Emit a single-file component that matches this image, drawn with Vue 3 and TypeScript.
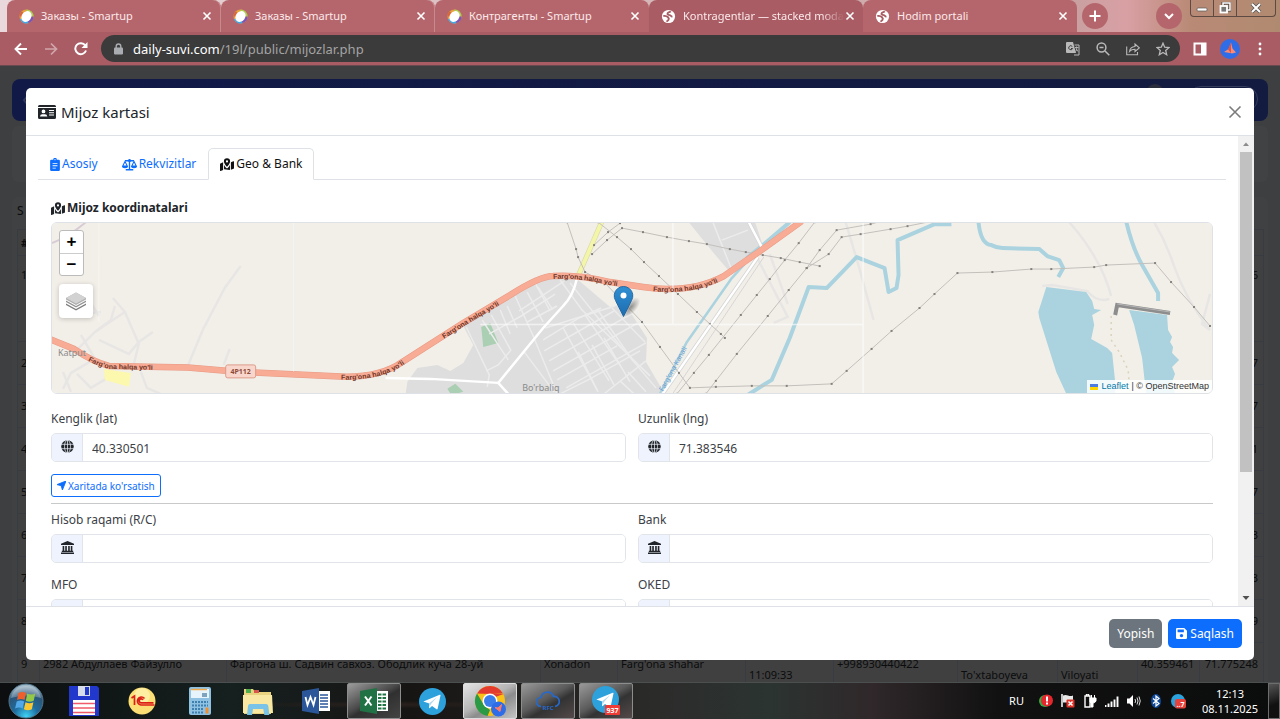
<script setup lang="ts">
import { ref } from 'vue'

interface BrowserTab { title: string; kind: 'smartup' | 'globe'; active?: boolean; fade?: boolean }
const browserTabs: BrowserTab[] = [
  { title: 'Заказы - Smartup', kind: 'smartup' },
  { title: 'Заказы - Smartup', kind: 'smartup' },
  { title: 'Контрагенты - Smartup', kind: 'smartup' },
  { title: 'Kontragentlar — stacked moda', kind: 'globe', active: true, fade: true },
  { title: 'Hodim portali', kind: 'globe' },
]

const columnWidths = [22, 187, 314, 77, 128, 88, 124, 100, 80, 62, 64]
const rows = [
  { no: '1', end: '6', tall: true },
  { no: '2', end: '7' },
  { no: '3', end: '7' },
  { no: '4', end: '1' },
  { no: '5', end: '7' },
  { no: '6', end: '3' },
  { no: '7', end: '3' },
  { no: '8', end: '9' },
]

const cardTabs = [
  { label: 'Asosiy', icon: 'clipboard', w: 10 },
  { label: 'Rekvizitlar', icon: 'scale', w: 15 },
  { label: 'Geo & Bank', icon: 'mapped', w: 14 },
]
const currentTab = ref('Geo & Bank')

const lat = ref('40.330501')
const lng = ref('71.383546')
const account = ref('')
const bank = ref('')
const mfo = ref('')
const oked = ref('')

type Point = [number, number]
const powerLines: Point[][] = [
  [[567, 222], [576, 249], [578, 257], [585, 272], [605, 283], [642, 322], [660, 347], [679, 373], [690, 388], [716, 387], [752, 386], [787, 386], [832, 384], [847, 371], [872, 349], [892, 331], [920, 308], [935, 294], [958, 273], [993, 272], [1032, 269], [1052, 269], [1095, 267], [1107, 265], [1156, 263], [1172, 282], [1195, 307], [1211, 326]],
  [[598, 222], [617, 237], [631, 249], [644, 262], [659, 276], [678, 294], [697, 312], [710, 324], [721, 334], [725, 338]],
  [[620, 223], [608, 232], [594, 245]],
  [[592, 254], [607, 240], [622, 228], [643, 232], [667, 237], [689, 241], [707, 244], [730, 249], [746, 252], [763, 255], [781, 258], [800, 262], [820, 266]],
  [[677, 394], [694, 373], [709, 355], [741, 315], [757, 295], [770, 279], [785, 260], [799, 243], [815, 222]],
  [[706, 394], [716, 381], [737, 354], [768, 316], [789, 290], [807, 268], [829, 254], [842, 237], [861, 234], [891, 229], [908, 226], [933, 221]],
  [[807, 268], [820, 250], [837, 230], [871, 224], [882, 221]],
]
const pylons = powerLines.flat()
const join = (pts: Point[]) => pts.map(p => p.join(',')).join(' ')

const streets = [
  'M466 327l23 48-2 12', 'M482 320l16 25 10 15', 'M491 315l20 36', 'M500 310l10 24', 'M507 306l10 22',
  'M515 296l18 40 24 58', 'M527 292l16 30', 'M538 287l14 22 4-3', 'M560 280l22 30 68 66', 'M570 283l48 60 38 45',
  'M489 334l32-18 34-22', 'M519 311l45-30', 'M527 322l30-16', 'M545 328l70-22', 'M543 340l36-22 22-10',
  'M544 351l70-40', 'M549 361l84-48', 'M553 371l90-51', 'M557 380l60-34', 'M566 388l80-45', 'M560 394l30-15 50-28',
  'M563 328l34 62', 'M573 323l36 58', 'M585 315l36 52', 'M597 309l36 52', 'M578 352l20 40', 'M592 345l22 40',
  'M604 338l26 44', 'M612 308l33 34', 'M524 352l30 40', 'M620 381l14 13', 'M628 372l18 20', 'M604 394l42-33',
  'M510 351l-12 14-12 6', 'M535 283l15 28', 'M713 222l19 48', 'M722 240l26-10',
]
const leftTracks = [
  'M70 356l24-24 16-12 4-14', 'M80 335l14 24-24 14-8 16', 'M94 332l30-20-12-14', 'M98 340l30 14 10-12 14-10', 'M124 312l14 32-6 24',
  'M62 372l8 20', 'M76 374l14 14 20-12 16 4', 'M140 372l6 16 14 6', 'M70 300l12 14 18-2', 'M88 300l10 16',
]
const roadLabels = [47, 301, 413, 540, 641]
</script>

<template>
  <div class="screen">
    <svg class="defs" aria-hidden="true">
      <symbol id="i-smartup" viewBox="0 0 16 16">
        <circle cx="8" cy="8" r="7.500" fill="#e8a13a" /><path d="M8 .5A7.500 7.500 0 0 1 15.500 8L8 8z" fill="#a9cf54" />
        <path d="M.5 8A7.500 7.500 0 0 1 3 2.500L8 8z" fill="#d8673c" /><path d="M15.500 8A7.500 7.500 0 0 1 10 15.200L8 8z" fill="#7b54b8" /><path d="M10 15.200A7.500 7.500 0 0 1 1 11L8 8z" fill="#43a7e6" />
        <ellipse cx="8" cy="8" rx="5" ry="6.200" transform="rotate(38 8 8)" fill="#fff" />
      </symbol>
      <symbol id="i-world" viewBox="0 0 16 16">
        <circle cx="8" cy="8" r="7" fill="#fff" />
        <path d="M2.500 7.500c2.500-.500 4 .300 5 1.300s1.500 1.500.5 2.700-1.500 1-1.800 2M10.500 2.500C9.500 3.500 7.500 3.200 7 4.500s1 2 2.200 2 1.500 1.500 3 1.800" fill="none" stroke="#a85c63" stroke-width="2" />
      </symbol>
      <symbol id="i-clipboard" viewBox="0 0 12 16">
        <path fill="currentColor" fill-rule="evenodd" d="M1.500 2H3.800a2.200 2.200 0 0 1 4.400 0h2.300A1.500 1.500 0 0 1 12 3.500v11a1.500 1.500 0 0 1-1.500 1.500h-9A1.500 1.500 0 0 1 0 14.500v-11A1.500 1.500 0 0 1 1.500 2zM6 1.300a.7.7 0 1 0 0 1.400.7.7 0 0 0 0-1.400zM3 6v1h6V6zm0 3v1h6V9zm0 3v1h4v-1z" />
      </symbol>
      <symbol id="i-scale" viewBox="0 0 20 16">
        <path d="M10 1v13M4 3h12M5 15h10" stroke="currentColor" stroke-width="1.800" fill="none" /><circle cx="10" cy="2.500" r="2" fill="currentColor" />
        <path d="M4 4L1 10h6zM16 4l-3 6h6z" fill="none" stroke="currentColor" stroke-width="1.400" /><path d="M0 10h8a4 3 0 0 1-8 0zM12 10h8a4 3 0 0 1-8 0z" fill="currentColor" />
      </symbol>
      <symbol id="i-mapped" viewBox="0 0 18 16">
        <path fill="currentColor" fill-rule="evenodd" d="M9 0a4 4 0 0 1 4 4c0 1.800-2.400 5-4 7-1.600-2-4-5.200-4-7a4 4 0 0 1 4-4zm0 2.600a1.400 1.400 0 1 0 0 2.800 1.400 1.400 0 0 0 0-2.800z" />
        <path fill="currentColor" d="M4 5.200v10L.700 16.400Q0 16.400 0 15.800V7.400Q0 7 .600 6.700zM14 5l3.200-1.200q.800-.200.800.500v8.500q0 .500-.600.700L14 14.900zM5.200 8.500c1 1.700 2.300 3.300 3.200 4.400h1.200c.9-1.100 2.200-2.700 3.200-4.400v6.600L5.200 14z" />
      </symbol>
      <symbol id="i-globe" viewBox="0 0 16 16">
        <circle cx="8" cy="8" r="7.700" fill="currentColor" />
        <path d="M0 5.300h16M0 10.700h16M8 0v16" stroke="#eff3fe" stroke-width=".9" /><ellipse cx="8" cy="8" rx="3.700" ry="7.800" fill="none" stroke="#eff3fe" stroke-width=".9" />
      </symbol>
      <symbol id="i-bank" viewBox="0 0 16 16">
        <path fill="currentColor" d="M8 0l8 3.500V5H0V3.500zM2 6h2v6h1.200V6h2v6h1.600V6h2v6H12V6h2v6h1v1.500H1V12h1zM0 14.300h16V16H0z" />
      </symbol>
      <symbol id="i-telegram" viewBox="0 0 28 28">
        <circle cx="14" cy="14" r="14" fill="#2ca1dc" /><path d="M4.500 14L21.500 7q1-.300.800.900l-3 13.500q-.300 1.300-1.400.5l-4.400-3.300-2.300 2.200q-.8.400-.8-.6l.3-4.200z" fill="#fff" /><path d="M10.500 15.700L18.500 9.500l-6 7-1.500 3z" fill="#b4d9ee" />
      </symbol>
    </svg>

    <header class="browser">
      <div class="strip">
        <div v-for="(t, i) in browserTabs" :key="i" class="btab" :class="{ active: t.active }">
          <svg class="fav" aria-hidden="true"><use :href="t.kind === 'smartup' ? '#i-smartup' : '#i-world'" /></svg>
          <span class="btitle" :class="{ fade: t.fade }">{{ t.title }}</span>
          <button class="plain" aria-label="Close tab"><svg width="10" height="10" viewBox="0 0 10 10"><path d="M1.500 1.500l7 7M8.500 1.500l-7 7" stroke="#fff" stroke-width="1.600" /></svg></button>
        </div>
        <button class="round" aria-label="New tab"><svg width="12" height="12" viewBox="0 0 12 12"><path d="M6 .5v11M.5 6h11" stroke="#fff" stroke-width="2" /></svg></button>
        <span class="grow"></span>
        <button class="round" aria-label="Search tabs"><svg width="12" height="12" viewBox="0 0 12 12"><path d="M2 4l4 4 4-4" stroke="#fff" stroke-width="2" fill="none" /></svg></button>
        <div class="wincontrols">
          <button aria-label="Minimize"><svg width="12" height="12" viewBox="0 0 12 12"><rect x="1" y="6" width="10" height="3" rx="1" fill="#fff" stroke="#555" stroke-width=".7" /></svg></button>
          <button aria-label="Restore"><svg width="12" height="12" viewBox="0 0 12 12"><path d="M4 3V1h7v7H9" stroke="#444" stroke-width="3" fill="none" /><path d="M4 3V1h7v7H9" stroke="#fff" stroke-width="1.500" fill="none" /><rect x="1.500" y="4" width="6.500" height="6.500" fill="#777" stroke="#fff" stroke-width="1.800" /></svg></button>
          <button class="wide" aria-label="Close"><svg width="12" height="12" viewBox="0 0 12 12"><path d="M2 2l8 8M10 2l-8 8" stroke="#555" stroke-width="3.500" /><path d="M2 2l8 8M10 2l-8 8" stroke="#fff" stroke-width="2" /></svg></button>
        </div>
      </div>
      <div class="toolbar">
        <div class="navkeys">
          <button class="plain" aria-label="Back"><svg width="14" height="14" viewBox="0 0 14 14"><path d="M13 7H2M7 1.500L1.500 7 7 12.500" stroke="#fff" stroke-width="1.900" fill="none" /></svg></button>
          <button class="plain dim" aria-label="Forward"><svg width="14" height="14" viewBox="0 0 14 14"><path d="M1 7h11M7 1.500L12.500 7 7 12.500" stroke="#fff" stroke-width="1.700" fill="none" /></svg></button>
          <button class="plain" aria-label="Reload"><svg width="14" height="14" viewBox="0 0 14 14"><path d="M12 8.500A5.500 5.500 0 1 1 11.300 3.500" stroke="#fff" stroke-width="2" fill="none" /><path d="M13.500 0v6h-6z" fill="#fff" /></svg></button>
        </div>
        <div class="omni">
          <svg width="9" height="12" viewBox="0 0 9 12"><path d="M2.200 5V3.300a2.300 2.300 0 0 1 4.600 0V5" stroke="#a9adb1" stroke-width="1.400" fill="none" /><rect y="4.500" width="9" height="7" rx="1" fill="#a9adb1" /></svg>
          <span class="url">daily-suvi.com<span>/19l/public/mijozlar.php</span></span>
          <button class="plain" aria-label="Translate"><svg width="14" height="14" viewBox="0 0 14 14"><path d="M1 0h6l3 11H1q-1 0-1-1V1q0-1 1-1z" fill="#b9b9b9" /><path d="M8.500 3H13v10H8" stroke="#b9b9b9" fill="none" /><path d="M9 5.500h3.500M10.500 4.500c.5 3 0 4-1 5M10 6.500l2 3" stroke="#b9b9b9" stroke-width=".9" fill="none" /><path d="M6.300 4.500a2 2 0 1 0 .3 2H5" stroke="#3b3b3b" fill="none" /></svg></button>
          <button class="plain" aria-label="Zoom"><svg width="14" height="14" viewBox="0 0 14 14"><circle cx="5.500" cy="5.500" r="4.400" stroke="#b9b9b9" stroke-width="1.500" fill="none" /><path d="M9 9l4.300 4.300M3.500 5.500h4" stroke="#b9b9b9" stroke-width="1.500" /></svg></button>
          <button class="plain" aria-label="Share"><svg width="14" height="14" viewBox="0 0 14 14"><path d="M.7 4.500v8.300h10.800V10M3.500 9.500c.5-3.500 2.500-4.800 5.500-5V2l4.300 3.800L9 9.500V7.200c-2.500 0-4 .5-5.500 2.300z" stroke="#b9b9b9" stroke-width="1.100" fill="none" /></svg></button>
          <button class="plain" aria-label="Bookmark"><svg width="14" height="14" viewBox="0 0 14 14"><path d="M7 1.200l1.700 4 4.300.4-3.300 2.800 1 4.300L7 10.400l-3.700 2.300 1-4.300L1 5.600l4.300-.4z" stroke="#b9b9b9" stroke-width="1.300" fill="none" /></svg></button>
        </div>
        <button class="plain" aria-label="Side panel"><svg width="14" height="14" viewBox="0 0 14 14"><path d="M.5.500h13v13H.5zM2.500 2.500v9H8v-9z" fill="#fff" fill-rule="evenodd" /></svg></button>
        <button class="plain" aria-label="Profile"><svg width="20" height="20" viewBox="0 0 20 20"><circle cx="10" cy="10" r="10" fill="#2f6de8" /><path d="M11 3.500l1.500 6 3.500 4-4 1-2-.5-6-1 4.500-3z" fill="#f58b78" /><path d="M11 3.500V14l-3-3.500z" fill="#d9534f" /></svg></button>
        <button class="plain" aria-label="Menu"><svg width="4" height="14" viewBox="0 0 4 14"><circle cx="2" cy="2" r="1.400" fill="#fff" /><circle cx="2" cy="7" r="1.400" fill="#fff" /><circle cx="2" cy="12" r="1.400" fill="#fff" /></svg></button>
      </div>
    </header>

    <main class="viewport">
      <div class="page">
        <div class="nav"><span class="navchev">‹</span><span class="navdot"></span><span class="navpill"></span></div>
        <div class="filters"></div>
        <div class="sheet">
          <p class="count">S</p>
          <table class="grid">
            <colgroup><col v-for="(w, i) in columnWidths" :key="i" :width="w" /></colgroup>
            <thead><tr><th>#</th><th v-for="n in 10" :key="n"></th></tr></thead>
            <tbody>
              <tr v-for="r in rows" :key="r.no" :class="{ tall: r.tall }">
                <td>{{ r.no }}</td><td v-for="n in 9" :key="n"></td><td class="end">{{ r.end }}</td>
              </tr>
              <tr>
                <td>9</td><td>2982 Абдуллаев Файзулло</td><td>Фаргона ш. Садвин савхоз. Ободлик куча 28-уй</td><td>Xonadon</td><td>Farg'ona shahar</td>
                <td class="low">11:09:33</td><td>+998930440422</td><td class="low">To'xtaboyeva</td><td class="low">Viloyati</td><td>40.359461</td><td class="end">71.775248</td>
              </tr>
            </tbody>
          </table>
        </div>
      </div>

      <div class="overlay">
        <section class="modal" role="dialog" aria-labelledby="card-title">
          <div class="mhead">
            <svg width="18" height="14" viewBox="0 0 18 14" aria-hidden="true"><path fill="#212529" fill-rule="evenodd" d="M1.500 0h15A1.500 1.500 0 0 1 18 1.500V2H0v-.500A1.500 1.500 0 0 1 1.500 0zM0 3h18v9.500a1.500 1.500 0 0 1-1.500 1.500h-15A1.500 1.500 0 0 1 0 12.500zM5.500 4.500a1.900 1.900 0 1 0 0 3.800 1.900 1.900 0 0 0 0-3.800zM2 11.500h7.300q-.3-2.300-2.300-2.300H4.300Q2.200 9.200 2 11.500zM11 5v1h5V5zm0 2.200v1h5v-1zm0 2.300v1h5v-1z" /></svg>
            <h5 id="card-title">Mijoz kartasi</h5>
            <button class="plain" aria-label="Yopish"><svg width="14" height="14" viewBox="0 0 14 14"><path d="M1.500 1.500l11 11M12.500 1.500l-11 11" stroke="#7b7b7b" stroke-width="1.600" /></svg></button>
          </div>

          <div class="mbody">
            <div class="mscroll">
              <div class="tabs" role="tablist">
                <button v-for="t in cardTabs" :key="t.label" role="tab" class="tab" :class="{ on: currentTab === t.label }" :aria-selected="currentTab === t.label" @click="currentTab = t.label">
                  <svg :width="t.w" height="13" aria-hidden="true"><use :href="'#i-' + t.icon" /></svg>{{ t.label }}
                </button>
              </div>

              <div class="pane">
                <h6><svg width="14" height="13" aria-hidden="true"><use href="#i-mapped" /></svg>Mijoz koordinatalari</h6>
                <div class="map">
                  <svg class="canvas" viewBox="51 222 1162 172" preserveAspectRatio="xMidYMid slice" role="img" aria-label="Xarita">
                    <defs>
                      <path id="road" d="M46 338L73 349Q92 362 108 366L187 367.700 240 372 340 376.700Q380 378 402 362L463 323 510 295Q540 276 553 276 577 274 610 282L643 287Q690 294 724 276L763 249 802 221" />
                      <linearGradient id="pin" x1="0" y1="0" x2="0" y2="1"><stop offset="0" stop-color="#2f8fd2" /><stop offset="1" stop-color="#1d6cb0" /></linearGradient>
                      <radialGradient id="pinshade"><stop offset="0" stop-color="#000" stop-opacity=".4" /><stop offset="1" stop-color="#000" stop-opacity="0" /></radialGradient>
                    </defs>
                    <rect x="0" y="180" width="1280" height="260" fill="#f2efe9" />
                    <path d="M547 277L577 279 610 307 625 304 647 338 646 362 666 396H405L407 382 417 368 437 365 450 371 463 363 473 345 463 326 510 298z" fill="#dedede" />
                    <path d="M688 221L713 252 731 273 747 262 764 248 755 221z" fill="#dedede" />
                    <g fill="none" stroke="#e8e6e4" stroke-width="2.500">
                      <path v-for="(d, i) in leftTracks" :key="i" :d="d" />
                      <path d="M240 266l-16 22-22 42-15 36M229 349l-6 16M1070 222q16 18 26 36 10 16 16 38M1155 222q12 20 20 44 12 34 36 64l-8-6 8-30M1043 286l10-1 35 6q10 12 22 8M846 222l12 40 16 58" />
                      <path d="M757 257l31 60-14 6M770 254l18 50" />
                    </g>
                    <path d="M103 369l27 4-2 14-24-7z" fill="#fcf8ae" />
                    <path d="M51 243q16-6 34-21" fill="none" stroke="#d9cbd6" stroke-width="2" />
                    <path d="M481 327l9-4 8 20-15 4zM447 389l8-5 8 8-12 3z" fill="#aacfb2" />
                    <g fill="none" stroke="#ececec" stroke-width="1.500"><path v-for="(d, i) in streets" :key="i" :d="d" /></g>
                    <path d="M385 378l45 1 68 4M577 278q-4 18-14 28l-20 22-45 55 10 11" fill="none" stroke="#fff" stroke-width="2.500" />
                    <g fill="none" stroke="#aad3df" stroke-width="4" stroke-linejoin="round">
                      <path d="M748 395l24-15 18-42 19-51 18 1 30-31 28 11 4 24 8-4 2-13-1-35 37-16h17" />
                      <path d="M979 221q2 23 13 24 6 3 11 3l37 1 8 7 12 4 4 8-5 9M1127 221q6 26 16 44l16 28v8M790 222l-27 23-16 13" />
                      <path d="M750 258l-18 20-45 64-27 52" stroke-width="2.500" />
                    </g>
                    <path d="M1047 287l40 5 6 9 2 8 7 1-9 5 2 10-3 14 16 9 5 5 3 29v14h-48l-11-24-17-54-1-6zM1130 310l38 5 1 15 4 7-2 5 3 5-1 6 7 7-7 7 3 7-3 8 3 12h-29l-4-36-8-33z" fill="#aad3df" />
                    <path d="M1112 316v24l8 12 9 18 2 24" fill="none" stroke="#d9d2bb" stroke-width="1.500" stroke-dasharray="2 4" />
                    <path d="M1116 315l2-10 53 8" fill="none" stroke="#8d8d8d" stroke-width="4" /><path d="M1118 304l53 8" stroke="#b5b5b5" />
                    <path d="M763 249l-14-27M758 257l-96 138" fill="none" stroke="#d5d5d5" stroke-width="4" />
                    <path d="M763 249l-14-27M758 257l-96 138" fill="none" stroke="#fff" stroke-width="2.500" />
                    <path d="M764 257l-92 138" stroke="#d7d5d5" />
                    <path d="M602 221l-24 55" stroke="#d3d5a0" stroke-width="5" /><path d="M602 221l-24 55" stroke="#f3f5a9" stroke-width="4" />
                    <g fill="none" stroke="#c3c0bc" stroke-width="1"><polyline v-for="(l, i) in powerLines" :key="i" :points="join(l)" /></g>
                    <rect v-for="(p, i) in pylons" :key="i" :x="p[0] - 1" :y="p[1] - 1" width="2" height="2" fill="#85817d" />
                    <use href="#road" fill="none" stroke="#e79a84" stroke-width="6.500" /><use href="#road" fill="none" stroke="#f8ab95" stroke-width="5.500" />
                    <path d="M673 222v102M480 324.500h384M863.500 222v172" stroke="#fff" stroke-width="1.500" opacity=".6" />
                    <path d="M98 222v100M293 222v150" stroke="#fff" opacity=".35" />
                    <g class="roadname">
                      <text v-for="o in roadLabels" :key="o" dy="3"><textPath href="#road" :startOffset="o">Farg'ona halqa yo'li</textPath></text>
                    </g>
                    <rect x="225" y="365" width="30" height="13" rx="2" fill="#f9d6cc" stroke="#dc9c8a" /><text class="shield" x="240" y="374">4P112</text>
                    <text class="place" x="57" y="356">Katput</text><text class="place" x="522" y="391">Bo'rbaliq</text>
                    <text class="canal" transform="translate(663 392) rotate(-61)">Farg'ona Kanali</text>
                    <ellipse cx="631" cy="307" rx="12" ry="6" transform="rotate(-48 631 307)" fill="url(#pinshade)" />
                    <path d="M623.500 316.500l-8-16a9.300 9.300 0 1 1 16 0z" fill="url(#pin)" stroke="#2368a3" /><circle cx="623.500" cy="295.500" r="3" fill="#fff" />
                  </svg>
                  <div class="mapctl">
                    <div class="zoom"><button aria-label="Zoom in">+</button><button aria-label="Zoom out">−</button></div>
                    <button class="layers" aria-label="Layers"><svg width="20" height="20" viewBox="0 0 20 20"><path d="M0 12.500l10 5.500 10-5.500v1.500L10 19.500 0 14z" fill="#7e7e7e" /><path d="M0 9.500L10 15l10-5.500V11L10 16.500 0 11z" fill="#949494" /><path d="M10 1.500l10 5.500v1.500L10 14 0 8.500V7z" fill="#b0b0b0" /><path d="M10 1.500L20 7l-10 5.500L0 7z" fill="#d2d2d2" /></svg></button>
                  </div>
                  <div class="attrib"><svg width="8" height="6" viewBox="0 0 8 6"><path d="M0 0h8v3H0z" fill="#4c7be1" /><path d="M0 3h8v3H0z" fill="#ffd500" /></svg><a href="#">Leaflet</a><span>| © OpenStreetMap</span></div>
                </div>

                <div class="fields">
                  <div class="field"><label for="f-lat">Kenglik (lat)</label><div class="group"><span class="addon"><svg width="13" height="13" aria-hidden="true"><use href="#i-globe" /></svg></span><input id="f-lat" v-model="lat" type="text" /></div></div>
                  <div class="field"><label for="f-lng">Uzunlik (lng)</label><div class="group"><span class="addon"><svg width="13" height="13" aria-hidden="true"><use href="#i-globe" /></svg></span><input id="f-lng" v-model="lng" type="text" /></div></div>
                </div>
                <button class="show"><svg width="9" height="9" viewBox="0 0 10 10" aria-hidden="true"><path d="M10 0L6 10 4.700 5.300 0 4z" fill="currentColor" stroke="currentColor" /></svg>Xaritada ko'rsatish</button>
                <hr />
                <div class="fields last">
                  <div class="field"><label for="f-acc">Hisob raqami (R/C)</label><div class="group"><span class="addon"><svg width="13" height="13" aria-hidden="true"><use href="#i-bank" /></svg></span><input id="f-acc" v-model="account" type="text" /></div></div>
                  <div class="field"><label for="f-bank">Bank</label><div class="group"><span class="addon"><svg width="13" height="13" aria-hidden="true"><use href="#i-bank" /></svg></span><input id="f-bank" v-model="bank" type="text" /></div></div>
                  <div class="field"><label for="f-mfo">MFO</label><div class="group"><span class="addon"></span><input id="f-mfo" v-model="mfo" type="text" /></div></div>
                  <div class="field"><label for="f-oked">OKED</label><div class="group"><span class="addon"></span><input id="f-oked" v-model="oked" type="text" /></div></div>
                </div>
              </div>
            </div>
            <div class="bar" aria-hidden="true">
              <svg width="16" height="16" viewBox="0 0 16 16"><path d="M5 10l3-3.500 3 3.500z" fill="#8b8b8b" /></svg>
              <div class="track"><div class="thumb"></div></div>
              <svg width="16" height="16" viewBox="0 0 16 16"><path d="M4.500 6h7L8 10z" fill="#505050" /></svg>
            </div>
          </div>

          <div class="mfoot">
            <button class="btn gray">Yopish</button>
            <button class="btn blue"><svg width="11" height="11" viewBox="0 0 14 14" aria-hidden="true"><path fill="#fff" fill-rule="evenodd" d="M1.500 0h9L14 3.500v9a1.500 1.500 0 0 1-1.500 1.500h-11A1.500 1.500 0 0 1 0 12.500v-11A1.500 1.500 0 0 1 1.500 0zM2 2v3.500h8V2zm5 5.500a2.200 2.200 0 1 0 0 4.400 2.200 2.200 0 0 0 0-4.400z" /></svg>Saqlash</button>
          </div>
        </section>
      </div>
    </main>

    <footer class="taskbar">
      <button class="start" aria-label="Start">
        <svg width="36" height="36" viewBox="0 0 36 36"><defs><radialGradient id="orb" cx=".5" cy=".95" r=".9"><stop offset="0" stop-color="#3fd3f5" /><stop offset=".4" stop-color="#1f6c9f" /><stop offset=".75" stop-color="#2b5578" /><stop offset="1" stop-color="#9fb8c8" /></radialGradient></defs><circle cx="18" cy="18" r="17" fill="url(#orb)" stroke="#52758b" /><path d="M3 15Q6 3 18 3t15 12q-15-5-30 0z" fill="#fff" opacity=".28" /><path d="M10.500 10q4-2 7.500 0l-1.500 7q-3.500-2-7.500 0z" fill="#ee5f2b" /><path d="M19.300 10.600q4 2 8 0l-1.600 7.200q-4 2-7.900 0z" fill="#94c847" /><path d="M8.700 18.500q4-2 7.500 0l-1.600 7q-3.500-2-7.500 0z" fill="#52a8e8" /><path d="M17.500 19.200q4 2 7.900 0l-1.600 7q-4 2-7.900 0z" fill="#fbc832" /></svg>
      </button>
      <div class="apps">
        <button aria-label="Total Commander"><svg width="30" height="30" viewBox="0 0 30 30"><path d="M0 0h28l2 2v28H0z" fill="#2238cc" /><path d="M9 0h12v10H9z" fill="#d7dcea" /><path d="M16 1h4v8h-4z" fill="#2238cc" /><path d="M4 14h22v15H4z" fill="#fff" /><path d="M4 17.500h22M4 22h22M4 26.500h22" stroke="#ef5b6a" stroke-width="1.300" /></svg></button>
        <button aria-label="1C"><svg width="28" height="28" viewBox="0 0 28 28"><circle cx="14" cy="14" r="13.500" fill="#fbdf74" /><circle cx="14" cy="9" r="8" fill="#fff3b5" opacity=".7" /><path d="M3.500 11l3-2v9M16.500 11.500a4 4 0 1 0-3.500 6.500h13.500M15 13a2 2 0 1 0-1.500 2.800h12" stroke="#dc2018" stroke-width="1.700" fill="none" /></svg></button>
        <button aria-label="Calculator"><svg width="22" height="28" viewBox="0 0 22 28"><rect width="22" height="28" rx="2" fill="#8fc2e2" /><rect x="2" y="2" width="18" height="9" fill="#e8f4fb" /><path d="M2 2.500h16" stroke="#f0a848" stroke-width="1.500" /><rect x="13" y="6" width="5" height="4" fill="#7da3bd" /><path d="M3 15h16M3 18.500h16M3 22h12M3 25.500h12" stroke="#3f7fae" stroke-width="2" stroke-dasharray="2 1" /><path d="M16.500 20.500h3v6h-3z" fill="#ef8f30" /></svg></button>
        <button aria-label="Explorer"><svg width="32" height="28" viewBox="0 0 32 28"><path d="M2 2h9l2 3h16v22H2z" fill="#ead37e" /><path d="M4 2h5v4H4z" fill="#4fae4b" /><path d="M12 3h5v3h-5z" fill="#d8574b" /><path d="M1 8h29l1 18H1z" fill="#f8e8a2" /><path d="M5 28l1-9q.3-2 2-2h16q2 0 2.300 2l1 9h-5l-1-6H11l-1 6z" fill="#79c3e8" /></svg></button>
        <button aria-label="Word"><svg width="28" height="26" viewBox="0 0 28 26"><path d="M16 3h12v20H16z" fill="#fff" /><path d="M18 7h8M18 10h8M18 13h8M18 16h8M18 19h8" stroke="#2b579a" stroke-width="1.300" /><path d="M0 3L17 0v26L0 23z" fill="#2b579a" /><path d="M3.500 9l2 8L8.500 9l3 8 2-8" stroke="#fff" stroke-width="1.800" fill="none" /></svg></button>
        <button class="open" aria-label="Excel"><svg width="28" height="26" viewBox="0 0 28 26"><path d="M16 3h12v20H16z" fill="#fff" /><path d="M18 6.500h8M18 10h8M18 13.500h8M18 17h8M18 20.500h8" stroke="#207245" stroke-width="2" stroke-dasharray="3.500 1" /><path d="M0 3L17 0v26L0 23z" fill="#207245" /><path d="M5 8.500l6.500 9M11.500 8.500l-6.500 9" stroke="#fff" stroke-width="2" /></svg></button>
        <button aria-label="Telegram"><svg width="27" height="27"><use href="#i-telegram" /></svg></button>
        <button class="open lit" aria-label="Chrome"><svg width="32" height="32" viewBox="0 0 32 32"><circle cx="16" cy="16" r="15" fill="#fbc116" /><path d="M3 8.500A15 15 0 0 1 29 8.500L16 9z" fill="#e33b2e" /><path d="M3 8.500L10 20l6 5-2.500 6A15 15 0 0 1 3 8.500z" fill="#2a9a47" /><path d="M29.500 9H16v5z" fill="#e33b2e" /><circle cx="16" cy="16" r="7.500" fill="#fff" /><circle cx="16" cy="16" r="6" fill="#3b7de9" /><circle cx="24.500" cy="24" r="7.500" fill="#2f6de8" /><path d="M27.500 19.500l-1.500 7-5-4 3 .5z" fill="#ff7a66" stroke="#ff7a66" /></svg></button>
        <button class="open mid" aria-label="Cloud"><svg width="24" height="22" viewBox="0 0 24 22"><path d="M5 16.500a4.500 4.500 0 0 1 0-9 6.500 6.500 0 0 1 12.500-1A5 5 0 0 1 19 16.500" fill="none" stroke="#2769c9" stroke-width="1.700" /><text x="12" y="20" text-anchor="middle" class="rfc">RFC</text></svg></button>
        <button class="open mid" aria-label="Telegram"><svg width="28" height="30" viewBox="0 0 28 30"><use href="#i-telegram" width="27" height="27" /><rect x="13" y="19" width="15" height="10" rx="1" fill="#ee3b36" /><text x="20.500" y="27" text-anchor="middle" class="unread">937</text></svg></button>
      </div>
      <div class="tray">
        <span class="lang">RU</span>
        <svg width="14" height="14" viewBox="0 0 14 14"><circle cx="6" cy="7" r="6" fill="#2fae46" /><circle cx="8" cy="6.500" r="6" fill="#e3272c" /><path d="M8 2.500v5M8 8.500v2" stroke="#fff" stroke-width="2" /></svg>
        <svg width="14" height="14" viewBox="0 0 14 14"><path d="M1 0v13" stroke="#fff" stroke-width="1.500" /><path d="M2 1.500q2.500-1 5 0t5 0v7H2z" fill="#e8e8e8" /><rect x="5.500" y="5.500" width="8" height="8" rx="1" fill="#dd3328" /><path d="M7.500 7.500l4 4M11.500 7.500l-4 4" stroke="#fff" stroke-width="1.500" /></svg>
        <svg width="14" height="14" viewBox="0 0 14 14"><path d="M2 2h5v11H2zM3.500 0h2v2h-2z" fill="none" stroke="#fff" stroke-width="1.400" /><path d="M7 4h6v3q-1 2-3 2v4H8V9L7 8zM8.500 1v3M11.500 1v3" fill="#fff" stroke="#fff" /></svg>
        <svg width="14" height="14" viewBox="0 0 14 14"><path d="M.5 11v2M3.500 9.500V13M6.500 7.500V13M9.500 5.500V13M12.500 2.500V13" stroke="#fff" stroke-width="1.900" /></svg>
        <svg width="14" height="14" viewBox="0 0 14 14"><path d="M0 4.500h2.500L6 1v12L2.500 9.500H0z" fill="#fff" /><path d="M8 5q1.200 2 0 4M10 3.500q2 3.500 0 7M12 2.500q2.500 4.500 0 9" stroke="#ddd" fill="none" /></svg>
        <svg width="14" height="14" viewBox="0 0 14 14"><ellipse cx="7" cy="7" rx="5" ry="7" fill="#0d4796" /><path d="M4 4.500l6 5L7 12V2l3 2.500-6 5" stroke="#fff" fill="none" stroke-width="1.200" /></svg>
        <svg width="15" height="15" viewBox="0 0 15 15"><circle cx="7" cy="7" r="7" fill="#2ca1dc" /><rect x="4" y="5" width="11" height="9.500" rx="2" fill="#e6413a" /><text x="9.500" y="12.500" text-anchor="middle" class="unread">..7</text></svg>
      </div>
      <div class="clock"><span>12:13</span><span>08.11.2025</span></div>
      <button class="desk" aria-label="Show desktop"></button>
    </footer>
  </div>
</template>

<style>
body { margin: 0; }
</style>

<style scoped>
.screen { display: flex; flex-direction: column; height: 100vh; overflow: hidden; font-family: "Noto Sans", "Open Sans", sans-serif; font-size: 12px; line-height: 16px; color: #212529; }
.defs { display: none; }
button { font: inherit; color: inherit; margin: 0; padding: 0; border: 0; background: none; cursor: pointer; }
.plain { display: flex; align-items: center; justify-content: center; }
.grow { flex: 1; }

.strip { display: flex; height: 32px; padding-left: 7px; background: linear-gradient(90deg, #ead9dc 0, #c9a0a0 84%, #d9a0a4 88%, #b98a76 93%, #b08a70 100%); }
.btab { display: flex; align-items: center; gap: 7px; flex: 0 1 214px; min-width: 0; box-sizing: border-box; padding: 0 9px 0 12px; background: #b5666c; color: #fbe9ea; font-size: 11px; border-radius: 8px 8px 0 0; box-shadow: inset -1px 0 #c9898d; }
.btab.active { background: #a95c64; box-shadow: none; }
.btab:nth-child(3), .btab:nth-child(5) { box-shadow: none; }
.fav { width: 15px; height: 15px; flex: none; }
.btitle { flex: 1; white-space: nowrap; }
.fade { margin-right: -6px; mask-image: linear-gradient(90deg, #000 86%, transparent); }
.round { display: flex; align-items: center; justify-content: center; width: 26px; height: 26px; margin: 3px 7px 3px 5px; border-radius: 50%; background: #b5666c; }
.wincontrols { display: flex; height: 16px; margin: 0 4px 0 1px; border: 1px solid #5d4a42; border-top: 0; border-radius: 0 0 4px 4px; }
.wincontrols button { display: flex; align-items: center; justify-content: center; width: 23px; border-right: 1px solid #5d4a42; }
.wincontrols .wide { width: 38px; border: 0; }

.toolbar { display: flex; align-items: center; gap: 13px; height: 34px; box-sizing: border-box; padding: 0 13px 0 14px; background: #a95c64; border-bottom: 1px solid #6a4a4e; }
.navkeys { display: flex; gap: 16px; }
.toolbar .dim { opacity: .45; }
.toolbar .plain { min-width: 14px; }
.omni { display: flex; flex: 1; align-items: center; gap: 16px; height: 27px; padding: 0 10px 0 13px; border-radius: 14px; background: #3b3b3b; }
.url { flex: 1; margin-left: -6px; font-size: 13px; color: #fff; }
.url span { color: #a4a4a4; }

.viewport { display: grid; flex: 1; min-height: 0; grid-template: minmax(0, 1fr) / minmax(0, 1fr); background: #3d3f41; }
.page, .overlay { grid-area: 1 / 1; min-height: 0; }
.page { padding: 13px 12px 0; overflow: hidden; color: #0b0c0d; }
.nav { display: flex; height: 42px; padding: 0 10px; border-radius: 8px; background: linear-gradient(90deg, #111a47, #131b40); }
.navchev { flex: 1; font-size: 22px; line-height: 36px; color: #343a5c; }
.navdot { width: 18px; height: 18px; margin: 5px 24px; border-radius: 50%; background: #2a2d3c; }
.navpill { width: 70px; height: 26px; margin-top: 7px; box-sizing: border-box; border: 1px solid #353c5c; border-radius: 13px; }
.filters { height: 56px; margin-top: 5px; border-radius: 6px; background: #414243; }
.sheet { margin-top: 15px; padding: 6px 5px 0; background: #404142; border-radius: 6px; }
.count { margin: 0 0 6px; height: 20px; }
.grid { width: 100%; table-layout: fixed; border-collapse: collapse; white-space: nowrap; background: #404040; font-size: 11px; }
.grid th, .grid td { height: 43px; box-sizing: border-box; padding: 4px 3px; border: 1px solid #393b43; text-align: left; font-weight: 400; }
.grid th { height: 26px; padding: 0 3px; font-weight: 700; }
.grid .tall td { height: 86px; padding-bottom: 52px; }
.grid .low { vertical-align: bottom; padding-bottom: 2px; }
.grid .end { text-align: right; padding-right: 5px; }

.overlay { display: flex; padding: 22px 26px; position: relative; z-index: 1; }
.modal { display: flex; flex: 1; flex-direction: column; min-width: 0; background: #fff; border-radius: 5px; }
.mhead { display: flex; flex: none; align-items: center; gap: 5px; height: 47px; padding: 0 12px; border-bottom: 1px solid #dee2e6; }
.mhead h5 { flex: 1; margin: 0; font-size: 15px; font-weight: 400; }
.mbody { display: flex; flex: 1; min-height: 0; }
.mscroll { flex: 1; min-width: 0; padding: 12px; overflow-y: auto; scrollbar-width: none; }
.tabs { display: flex; border-bottom: 1px solid #dee2e6; }
.tab { display: flex; align-items: center; gap: 2px; height: 32px; margin-bottom: -1px; padding: 0 11px; border: 1px solid transparent; border-radius: 5px 5px 0 0; color: #0d6efd; }
.tab.on { color: #111; background: #fff; border-color: #dee2e6 #dee2e6 #fff; }
.pane { padding: 20px 13px 0; }
.pane h6 { display: flex; align-items: center; gap: 2px; margin: 0 0 6px; font-size: 12px; font-weight: 700; }
.map { position: relative; height: 170px; border: 1px solid #dee2e6; border-radius: 6px; overflow: hidden; }
.canvas { display: block; width: 100%; height: 100%; }
.roadname { font-family: "Liberation Sans", sans-serif; font-size: 7px; font-weight: 700; fill: #6d3527; }
.shield { font-size: 7px; font-weight: 700; fill: #8d4a3a; text-anchor: middle; }
.place { font-size: 9px; fill: #8a8a8a; }
.canal { font-size: 7px; fill: #6f9fd0; }
.mapctl { position: absolute; left: 7px; top: 7px; display: flex; flex-direction: column; gap: 8px; align-items: flex-start; }
.zoom { display: flex; flex-direction: column; width: 23px; border: 1px solid #bbb; border-radius: 3px; background: #fff; overflow: hidden; }
.zoom button { height: 22px; font: 700 17px/20px "Liberation Sans", sans-serif; color: #000; }
.zoom button + button { border-top: 1px solid #ccc; }
.layers { display: flex; align-items: center; justify-content: center; width: 34px; height: 34px; border-radius: 4px; background: #fff; box-shadow: 0 1px 5px rgba(0, 0, 0, .2); }
.attrib { position: absolute; right: 0; bottom: 0; display: flex; align-items: center; gap: 3px; padding: 0 3px; background: rgba(255, 255, 255, .85); font: 9px/13px "Liberation Sans", sans-serif; color: #333; }
.attrib a { color: #0078a8; text-decoration: none; }

.fields { display: grid; grid-template-columns: 1fr 1fr; gap: 14px 12px; margin-top: 17px; }
.field label { display: block; margin-bottom: 6px; color: #3c4146; }
.group { display: flex; height: 29px; box-sizing: border-box; border: 1px solid #e1e4e8; border-radius: 5px; overflow: hidden; }
.addon { display: flex; flex: none; align-items: center; justify-content: center; width: 31px; padding-bottom: 2px; box-sizing: border-box; background: #eff3fe; border-right: 1px solid #e1e4e8; }
.group input { flex: 1; min-width: 0; padding: 2px 9px 0; border: 0; outline: 0; background: #fff; font: inherit; color: #3c4146; }
.show { display: flex; align-items: center; gap: 2px; height: 23px; margin-top: 12px; padding: 0 5px; border: 1px solid #0d6efd; border-radius: 3px; color: #0d6efd; font-size: 10px; }
hr { margin: 6px 0 0; border: 0; border-top: 1px solid #c8c9ca; }
.last { margin-top: 8px; padding-bottom: 20px; }

.bar { display: flex; flex: none; flex-direction: column; width: 16px; background: #f1f1f1; }
.track { flex: 1; padding: 0 2px; }
.thumb { height: 73%; background: #c1c1c1; }
.mfoot { display: flex; flex: none; align-items: center; justify-content: flex-end; gap: 6px; height: 53px; padding: 0 12px; border-top: 1px solid #dee2e6; }
.btn { display: flex; align-items: center; gap: 3px; height: 29px; padding: 0 8px; border-radius: 5px; color: #fff; }
.gray { background: #6c757d; }
.blue { background: #0d6efd; }

.taskbar { display: flex; flex: none; align-items: center; height: 37px; box-sizing: border-box; border-top: 1px solid #4c4f50; background: radial-gradient(ellipse at 30% 60%, #2a211d 0, transparent 12%), linear-gradient(90deg, #0c0e0f 0, #15201f 18%, #171514 32%, #2c2c2b 52%, #2b3431 60%, #30282a 68%, #111 78%, #0b0c0c 100%); color: #fff; }
.start { width: 52px; height: 36px; }
.apps { display: flex; flex: 1; gap: 4px; padding-left: 5px; }
.apps button { display: flex; align-items: center; justify-content: center; width: 54px; height: 36px; box-sizing: border-box; }
.apps .open { border: 1px solid #8d8d8d; border-radius: 2px; background: linear-gradient(150deg, #9c9c9c 0, #4a4a4a 45%, #303030 55%, #444 100%); }
.apps .lit { background: linear-gradient(150deg, #e4e4e4 0, #b5b5b5 45%, #8c8c8c 60%, #c5c5c5 100%); border-color: #ddd; }
.apps .mid { background: linear-gradient(150deg, #999 0, #5a5a5a 45%, #333 60%, #54494a 100%); }
.unread { font-size: 7px; font-weight: 700; fill: #fff; }
.rfc { font-size: 6px; font-weight: 700; fill: #2769c9; }
.tray { display: flex; align-items: center; gap: 8px; margin-right: 2px; }
.lang { margin-right: 7px; font-size: 11px; }
.clock { display: flex; flex-direction: column; align-items: center; width: 80px; box-sizing: border-box; padding-left: 4px; font-size: 11px; line-height: 15px; }
.desk { width: 12px; height: 36px; box-sizing: border-box; border: 1px solid #6d6d6d; background: linear-gradient(160deg, #555, #111 60%); }
</style>
